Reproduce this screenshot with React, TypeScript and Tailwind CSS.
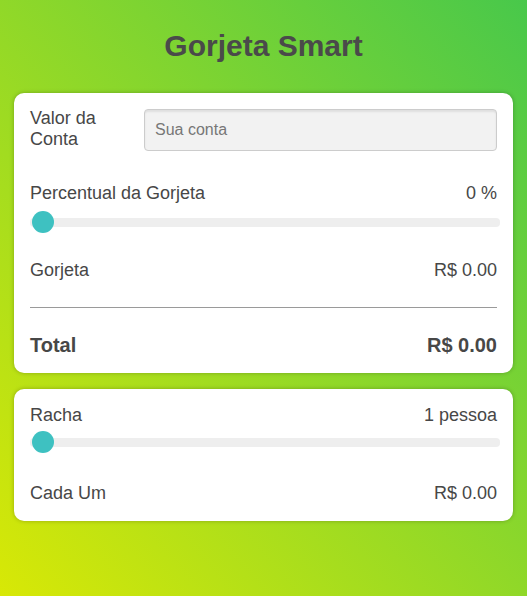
import React from "react";

function Slider() {
  return (
    <div className="relative h-[22px] flex items-center">
      <div className="h-[9px] w-full rounded-[4px] bg-[#eeeeee]" />
      <div className="absolute left-[2px] top-0 h-[22px] w-[22px] rounded-full bg-[#3ec1c1]" />
    </div>
  );
}

export default function App() {
  return (
    <div
      className="min-h-[596px] w-full bg-[linear-gradient(to_top_right,#d8e806,#48c84b)] px-[14px] pt-[26px] pb-[60px] text-[#474747]"
      style={{ fontFamily: '"Liberation Sans", Arial, sans-serif' }}
    >
      <h1 className="text-center text-[30px] font-bold leading-[40px] text-[#4a4a4a]">Gorjeta Smart</h1>
      <div className="mt-[27px] rounded-[10px] bg-white px-[16px] pt-[16px] pb-[16px] shadow-[0_0_4px_rgba(0,0,0,0.25)]">
        <div className="flex items-start">
          <div className="w-[114px] mt-[-1px] text-[18px] leading-[21px]">Valor da<br />Conta</div>
          <div className="flex h-[42px] flex-1 items-center rounded-[4px] border border-[#cccccc] bg-[#f2f2f2] pl-[10px] shadow-[inset_0_2px_2px_rgba(0,0,0,0.08)]">
            <span className="text-[16px] text-[#777777]">Sua conta</span>
          </div>
        </div>
        <div className="mt-[32px] flex justify-between text-[18px] leading-[21px]">
          <span>Percentual da Gorjeta</span>
          <span>0 %</span>
        </div>
        <div className="mt-[7px] mr-[-3px]">
          <Slider />
        </div>
        <div className="mt-[27px] flex justify-between text-[18px] leading-[21px]">
          <span>Gorjeta</span>
          <span>R$ 0.00</span>
        </div>
        <div className="mt-[26px] h-px bg-[#9a9a9a]" />
        <div className="mt-[25px] flex justify-between text-[20px] font-bold leading-[24px]">
          <span>Total</span>
          <span>R$ 0.00</span>
        </div>
      </div>
      <div className="mt-[16px] rounded-[10px] bg-white px-[16px] pt-[16px] pb-[17px] shadow-[0_0_4px_rgba(0,0,0,0.25)]">
        <div className="flex justify-between text-[18px] leading-[21px]">
          <span>Racha</span>
          <span>1 pessoa</span>
        </div>
        <div className="mt-[5px] mr-[-3px]">
          <Slider />
        </div>
        <div className="mt-[30px] flex justify-between text-[18px] leading-[21px]">
          <span>Cada Um</span>
          <span>R$ 0.00</span>
        </div>
      </div>
    </div>
  );
}
